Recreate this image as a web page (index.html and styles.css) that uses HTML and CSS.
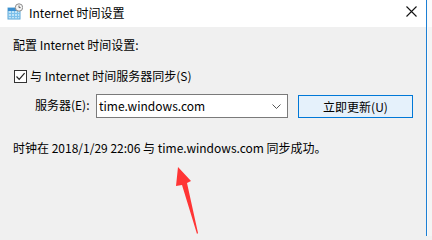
FILE: index.html
```html
<!DOCTYPE html>
<html lang="zh-CN">
<head>
<meta charset="utf-8">
<title>Internet 时间设置</title>
<link rel="stylesheet" href="styles.css">
</head>
<body>
<div class="screen">
  <div class="window">
    <div class="titlebar">
      <svg class="app-icon" width="16" height="17" viewBox="0 0 16 17">
        <rect x="1" y="5" width="12" height="11" fill="#bfe3f7" stroke="#5aa6d6" stroke-width="1"/>
        <rect x="1" y="5" width="12" height="3" fill="#3b8fd0"/>
        <g stroke="#7cc0ea" stroke-width="1">
          <line x1="4.5" y1="8" x2="4.5" y2="16"/>
          <line x1="7.5" y1="8" x2="7.5" y2="16"/>
          <line x1="10.5" y1="8" x2="10.5" y2="16"/>
          <line x1="1" y1="10.5" x2="13" y2="10.5"/>
          <line x1="1" y1="13.5" x2="13" y2="13.5"/>
        </g>
        <circle cx="12" cy="4.5" r="3.7" fill="#f4f4f4" stroke="#8c8c8c" stroke-width="1"/>
        <path d="M12 2.5 V4.6 H13.6" fill="none" stroke="#555" stroke-width="0.9"/>
      </svg>
      <span class="title">Internet 时间设置</span>
      <svg class="close" width="11" height="11" viewBox="0 0 11 11">
        <path d="M0.5 0.5 L10.5 10.5 M10.5 0.5 L0.5 10.5" stroke="#111" stroke-width="1.1"/>
      </svg>
    </div>
    <div class="content">
      <div class="heading">配置 Internet 时间设置:</div>
      <label class="check-row">
        <span class="checkbox">
          <svg width="11" height="11" viewBox="0 0 11 11"><path d="M1.5 5.5 L4.2 8.3 L9.6 2.2" fill="none" stroke="#222" stroke-width="1.2"/></svg>
        </span>
        <span>与 Internet 时间服务器同步(S)</span>
      </label>
      <div class="server-row">
        <span class="server-label">服务器(E):</span>
        <div class="combo">
          <span class="combo-text">time.windows.com</span>
          <svg class="chevron" width="9" height="5" viewBox="0 0 9 5"><path d="M0.5 0.5 L4.5 4.5 L8.5 0.5" fill="none" stroke="#555" stroke-width="1"/></svg>
        </div>
        <button class="btn">立即更新(U)</button>
      </div>
      <div class="status">时钟在 2018/1/29 22:06 与 time.windows.com 同步成功。</div>
      <svg class="arrow" width="30" height="70" viewBox="0 0 30 70">
        <polygon points="3,0 16,14 12,16 23,66 22,67 7,18 1,19" fill="#ff3535"/>
      </svg>
    </div>
  </div>
  <div class="edge"></div>
</div>
</body>
</html>
```
FILE: styles.css
```css
html, body {
  margin: 0;
  padding: 0;
}
body {
  width: 432px;
  height: 236px;
  overflow: hidden;
  font-family: "Noto Sans CJK SC", "Noto Sans", sans-serif;
  font-size: 12px;
  color: #000;
  background: #f0f0f0;
}
.screen {
  display: flex;
  height: 236px;
}
.window {
  width: 426px;
  flex-shrink: 0;
  border-right: 1px solid #1c7fd4;
  display: flex;
  flex-direction: column;
}
.edge {
  flex: 1;
  background: linear-gradient(#fbfbfb 0 27px, #f4f4f4 27px);
  border-left: 1px solid #fafafa;
}
.titlebar {
  height: 27px;
  background: #fff;
  display: flex;
  align-items: center;
  padding-left: 7px;
  padding-right: 9px;
}
.app-icon {
  margin-top: -4px;
}
.title {
  margin-left: 6px;
  line-height: 16px;
  flex: 1;
  margin-top: -2px;
}
.close {
  margin-top: -5px;
}
.content {
  flex: 1;
  background: #f0f0f0;
  padding: 10px 13px 0 13px;
  position: relative;
}
.heading {
  line-height: 16px;
}
.check-row {
  display: flex;
  align-items: center;
  margin-top: 15px;
  margin-left: 1px;
  line-height: 16px;
  gap: 3px;
}
.checkbox {
  width: 11px;
  height: 11px;
  border: 1px solid #333;
  background: #fff;
  display: flex;
}
.server-row {
  display: flex;
  align-items: center;
  margin-top: 10px;
  margin-left: 22px;
  white-space: nowrap;
}
.server-label {
  width: 55px;
  flex-shrink: 0;
  line-height: 16px;
  margin-top: -2px;
}
.combo {
  flex-shrink: 0;
  margin-left: 6px;
  width: 188px;
  height: 22px;
  border: 1px solid #7a7a7a;
  background: #fff;
  display: flex;
  align-items: center;
  padding-left: 2px;
  box-sizing: content-box;
}
.combo-text {
  flex: 1;
  line-height: 16px;
  margin-top: -1px;
}
.chevron {
  margin-right: 6px;
}
.btn {
  flex-shrink: 0;
  margin-left: 10px;
  width: 115px;
  height: 23px;
  margin-top: 1px;
  border: 1px solid #0078d7;
  background: #e5f1fb;
  font: inherit;
  color: #000;
  padding: 0;
  line-height: 16px;
}
.status {
  margin-top: 22px;
  line-height: 16px;
}
.arrow {
  position: absolute;
  left: 175px;
  top: 140px;
}
```
